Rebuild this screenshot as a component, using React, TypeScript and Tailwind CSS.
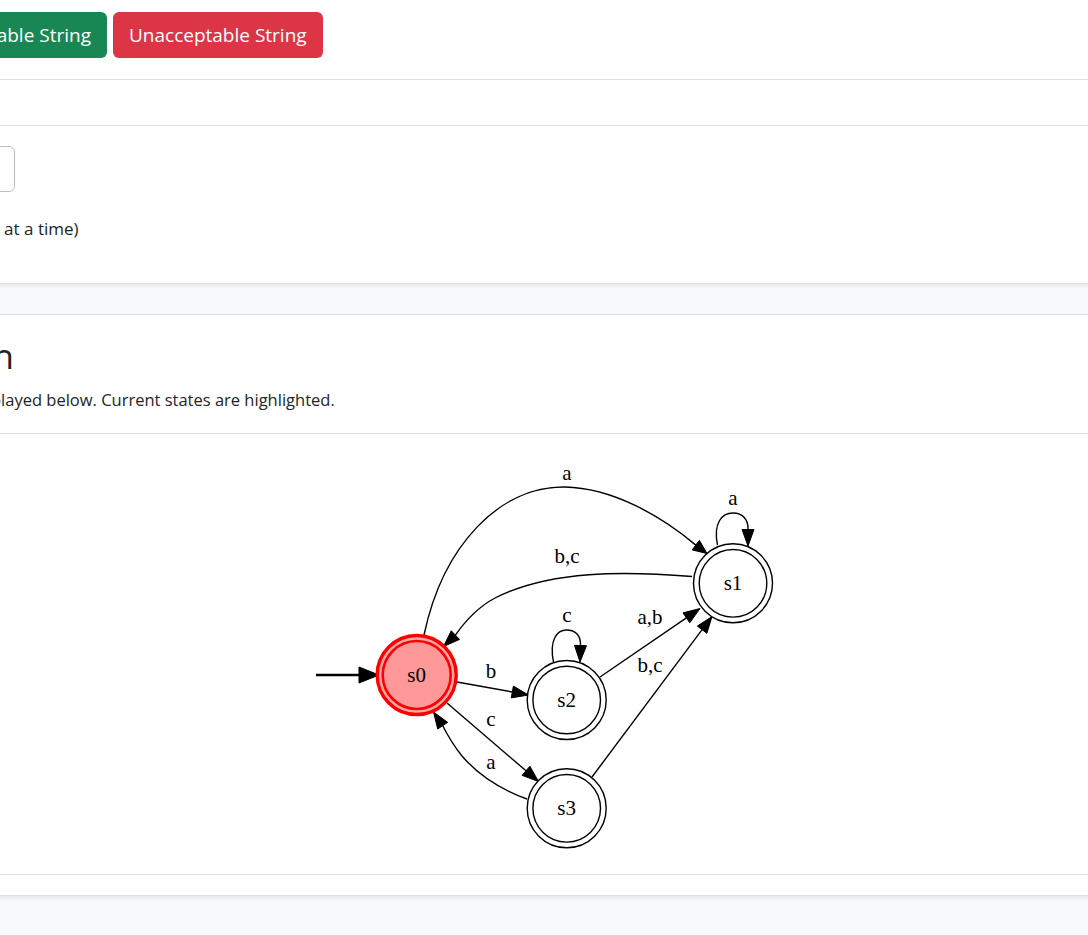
import * as React from "react"

type Pt = [number, number]

interface Edge {
    d: string
    tip: Pt
    base: Pt
}

const edges: Edge[] = [
    { d: "M424,635 C443,545 500,486 565,487 C612,488 660,515 695.8,545.1", tip: [707, 553.5], base: [695.8, 545.1] },
    { d: "M717.5,545 C713,523 722,513 733,513 C743,513 748.5,520 748,529.5", tip: [748, 546], base: [748, 529.5] },
    { d: "M692,576.5 C625,571 550,570 495,598 C480,606 466,620 455.4,635.1", tip: [443.5, 646.5], base: [455.4, 635.1] },
    { d: "M553.5,662 C549,640 557,630 566.5,630 C576,630 581,636 580.5,645.5", tip: [580, 662], base: [580.5, 645.5] },
    { d: "M457,682 L512.3,692", tip: [528.5, 695], base: [512.3, 692] },
    { d: "M600,677 L686.4,617.8", tip: [700, 608.5], base: [686.4, 617.8] },
    { d: "M592,777 L702.1,629.7", tip: [712, 616.5], base: [702.1, 629.7] },
    { d: "M447,703 L526,770.8", tip: [538.5, 781.5], base: [526, 770.8] },
    { d: "M527,799 C505,791 480,777 462,756 C454,746 448,736 442.7,725.7", tip: [433.5, 712], base: [442.7, 725.7] },
]

const labels: { x: number; y: number; t: string }[] = [
    { x: 567, y: 475, t: "a" },
    { x: 733, y: 500, t: "a" },
    { x: 567, y: 558, t: "b,c" },
    { x: 567, y: 617, t: "c" },
    { x: 650, y: 619, t: "a,b" },
    { x: 491, y: 673, t: "b" },
    { x: 650, y: 667, t: "b,c" },
    { x: 491, y: 721, t: "c" },
    { x: 491, y: 764, t: "a" },
]

const states: { x: number; y: number; name: string; active?: boolean }[] = [
    { x: 416.7, y: 675, name: "s0", active: true },
    { x: 733, y: 583.3, name: "s1" },
    { x: 566.7, y: 700, name: "s2" },
    { x: 566.7, y: 808.3, name: "s3" },
]

function arrowHead(tip: Pt, base: Pt, hw = 6) {
    const dx = tip[0] - base[0]
    const dy = tip[1] - base[1]
    const len = Math.hypot(dx, dy) || 1
    const nx = -dy / len
    const ny = dx / len
    return `${tip[0]},${tip[1]} ${base[0] + nx * hw},${base[1] + ny * hw} ${base[0] - nx * hw},${base[1] - ny * hw}`
}

function Diagram() {
    return (
        <svg width="470" height="400" viewBox="309 455 470 400" className="block">
            <g fontFamily="'Liberation Serif', 'Times New Roman', serif" fontSize="21" fill="#000">
                {/* start arrow */}
                <path d="M316,675 L360,675" stroke="#000" strokeWidth="2.6" fill="none" />
                <polygon points={arrowHead([379, 675], [359, 675], 8)} fill="#000" stroke="#000" strokeWidth="1" />

                {edges.map((e, i) => (
                    <g key={i}>
                        <path d={e.d} stroke="#000" strokeWidth="1.4" fill="none" />
                        <polygon points={arrowHead(e.tip, e.base)} fill="#000" stroke="#000" strokeWidth="1" />
                    </g>
                ))}

                {states.map((s) =>
                    s.active ? (
                        <g key={s.name}>
                            <circle cx={s.x} cy={s.y} r="39.5" fill="#ffa8a8" stroke="#ff0000" strokeWidth="3.4" />
                            <circle cx={s.x} cy={s.y} r="34" fill="#ff9999" stroke="#ff0000" strokeWidth="2.6" />
                        </g>
                    ) : (
                        <g key={s.name}>
                            <circle cx={s.x} cy={s.y} r="39.5" fill="#fff" stroke="#000" strokeWidth="1.4" />
                            <circle cx={s.x} cy={s.y} r="33.8" fill="#fff" stroke="#000" strokeWidth="1.4" />
                        </g>
                    )
                )}

                {states.map((s) => (
                    <text key={s.name} x={s.x} y={s.y + 7} textAnchor="middle">
                        {s.name}
                    </text>
                ))}
                {labels.map((l, i) => (
                    <text key={i} x={l.x} y={l.y + 5} textAnchor="middle">
                        {l.t}
                    </text>
                ))}
            </g>
        </svg>
    )
}

export default function App() {
    return (
        <div className="w-full h-[935px] overflow-hidden bg-[#f8f9fa] text-[#212529] font-['Open_Sans','Noto_Sans',sans-serif]">
            <div className="-mx-[186px]">
                {/* controls card */}
                <div className="bg-white border-b border-[#dee2e6] shadow-[0_2px_4px_rgba(0,0,0,0.08)]">
                    <div className="px-4 pt-3 pb-[21px] border-b border-[#dee2e6] flex items-center gap-[6px]">
                        <p className="h-[46px] px-4 rounded-[6px] bg-[#6c757d] text-white text-[19px] flex items-center">Check</p>
                        <p className="h-[46px] px-4 rounded-[6px] bg-[#198754] text-white text-[19px] flex items-center">Acceptable String</p>
                        <p className="h-[46px] px-4 rounded-[6px] bg-[#dc3545] text-white text-[19px] flex items-center">Unacceptable String</p>
                    </div>
                    <div className="h-[46px] border-b border-[#dee2e6]" />
                    <div className="px-4 pt-5 pb-[42px]">
                        <div className="w-[185px] h-[46px] rounded-[6px] border border-[#b9bec4] bg-white" />
                        <p className="mt-[25px] text-[17px] leading-6">Enter characters (one at a time)</p>
                    </div>
                </div>

                {/* automaton card */}
                <div className="mt-[30px] bg-white border-t border-b border-[#dee2e6] shadow-[0_2px_4px_rgba(0,0,0,0.08)]">
                    <div className="px-4 pt-5 pb-[21px] border-b border-[#dee2e6]">
                        <h2 className="text-[35px] leading-[42px] font-normal">Automaton</h2>
                        <p className="mt-[11px] text-[16.5px] leading-6">The automaton is displayed below. Current states are highlighted.</p>
                    </div>
                    <div className="pt-[21px] pb-[19px] border-b border-[#dee2e6] flex justify-center">
                        <Diagram />
                    </div>
                    <div className="h-[20px]" />
                </div>
            </div>
        </div>
    )
}
